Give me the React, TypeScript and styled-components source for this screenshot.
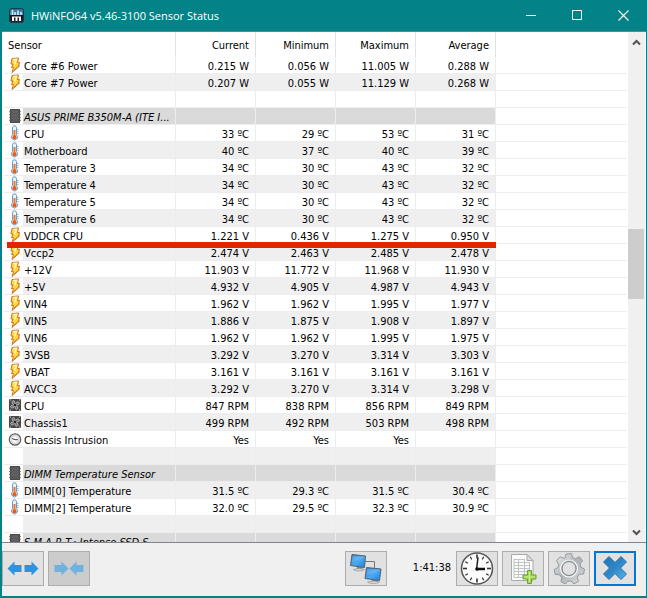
import React from "react";
import styled, { createGlobalStyle, css } from "styled-components";

const Global = createGlobalStyle`
  * { box-sizing: border-box; }
  html, body { margin: 0; padding: 0; }
  body { font-family: "DejaVu Sans Condensed", "DejaVu Sans", sans-serif; font-size: 11px; color: #000; }
  button { font: inherit; padding: 0; cursor: default; }
`;

const Window = styled.div`
  display: flex;
  flex-direction: column;
  height: 100vh;
  min-width: 560px;
  background: #f0f0f0;
  border: solid #038387;
  border-width: 0 1px 2px 2px;
`;

const TitleBar = styled.header`
  display: flex;
  align-items: center;
  flex: none;
  height: 32px;
  padding-left: 7px;
  background: #038387;
  border-bottom: 1px solid #4e8f91;
  color: #fff;
`;

const Title = styled.h1`
  flex: 1;
  margin: 0 0 0 6px;
  font: 400 11px/16px "Open Sans", "Noto Sans", sans-serif;
  white-space: nowrap;
`;

const CaptionButton = styled.button`
  display: flex;
  align-items: center;
  justify-content: center;
  width: 46px;
  height: 31px;
  border: 0;
  background: transparent;
`;

const ListArea = styled.main`
  position: relative;
  display: flex;
  flex: 1;
  min-height: 0;
  padding-right: 1px;
  overflow: hidden;
  background: #fff;
  border-bottom: 1px solid #82838c;
`;

const TableWrap = styled.div`
  flex: 1;
  min-width: 0;
  padding-left: 2px;
  overflow: hidden;
`;

const Table = styled.table`
  width: 100%;
  table-layout: fixed;
  border-collapse: separate;
  border-spacing: 0;
`;

const Col = styled.col<{ $w?: number }>`
  width: ${(p) => (p.$w ? `${p.$w}px` : "auto")};
`;

const HeadCell = styled.th<{ $name?: boolean }>`
  height: 25px;
  padding: ${(p) => (p.$name ? "2px 4px 0" : "2px 6px 0 0")};
  font-weight: 400;
  line-height: 16px;
  text-align: ${(p) => (p.$name ? "left" : "right")};
  border-right: 1px solid #e2e2e2;
  &:last-child { border-right: 0; }
`;

type Tone = "plain" | "alt" | "group";
const tones = { plain: "#fff", alt: "#efefef", group: "#dadada" };

const cell = css`
  height: 17px;
  padding: 3px 0 0;
  line-height: 13px;
  font-weight: 400;
  white-space: nowrap;
  border-bottom: 1px solid #ededed;
`;

const IconCell = styled.td`
  ${cell}
  padding: 0 0 0 4px;
  svg { display: block; }
`;

const NameCell = styled.th<{ $tone: Tone }>`
  ${cell}
  overflow: hidden;
  padding-right: 2px;
  padding-left: 1px;
  text-align: left;
  text-overflow: ellipsis;
  font-style: ${(p) => (p.$tone === "group" ? "italic" : "normal")};
  background: ${(p) => tones[p.$tone]};
  border-right: 1px solid #ededed;
`;

const ValueCell = styled.td<{ $tone: Tone }>`
  ${cell}
  padding-right: 6px;
  text-align: right;
  background: ${(p) => tones[p.$tone]};
  border-right: 1px solid #ededed;
`;

const FillCell = styled.td`
  ${cell}
`;

const Marker = styled.div`
  position: absolute;
  top: 210px;
  left: 5px;
  width: 489px;
  height: 6px;
  background: #e32400;
`;

const ScrollBar = styled.div`
  display: flex;
  flex-direction: column;
  flex: none;
  width: 17px;
  margin-left: 1px;
  padding: 0 1px 0 0;
  background: #f0f0f0;
`;

const ScrollButton = styled.button`
  display: flex;
  align-items: center;
  justify-content: center;
  height: 20px;
  border: 0;
  background: transparent;
`;

const Track = styled.div`
  display: flex;
  flex-direction: column;
  flex: 1;
`;

const Space = styled.div<{ $grow: number }>`
  flex: ${(p) => p.$grow} 1 0;
`;

const Thumb = styled.div`
  flex: none;
  height: 70px;
  background: #cdcdcd;
`;

const Toolbar = styled.footer`
  display: flex;
  align-items: center;
  flex: none;
  gap: 4px;
  height: 53px;
  padding: 0 10px 3px 0;
`;

const ToolButton = styled.button<{ $kind?: "pressed" | "focus" }>`
  display: flex;
  align-items: center;
  justify-content: center;
  flex: none;
  width: 42px;
  height: 35px;
  border: ${(p) => (p.$kind === "focus" ? "2px solid #0078d7" : "1px solid #adadad")};
  background: ${(p) => (p.$kind === "pressed" ? "#cccccc" : "#e1e1e1")};
`;

const Spacer = styled.div`
  flex: 1;
`;

const Clock = styled.time`
  width: 61px;
  padding-right: 1px;
  line-height: 16px;
  text-align: right;
`;

const Bolt = () => (
  <svg width="14" height="16" viewBox="0 0 14 16">
    <path d="M4 1.500 10.500 1 9.500 5.500H11.500L10.500 9H11.500L4 15.500 5.500 10.500H3.500L5 7H3z" fill="#ffd83a" stroke="#c9702c" strokeLinejoin="round" />
    <path d="M5 2.500 8.500 2.300 6.500 7.500" fill="none" stroke="#fff8b8" strokeWidth="1.500" />
    <path d="M10 9.500 5.500 13.500" stroke="#e58a16" />
  </svg>
);

const Thermo = () => (
  <svg width="14" height="16" viewBox="0 0 14 16">
    <path d="M4.500 9.700V2.800a2 2 0 0 1 4 0v6.900a3 3 0 1 1-4 0z" fill="#e4f4fc" stroke="#6b9cc4" />
    <path d="M6.500 5v7" stroke="#f0742a" strokeWidth="2" />
    <circle cx="6.500" cy="12.200" r="2" fill="#ee5a12" />
    <path d="M9 4.500h1.500M9 6.500h1.500M9 8.500h1.500" stroke="#92b6d0" />
  </svg>
);

const Chip = () => (
  <svg width="14" height="16" viewBox="0 0 14 16">
    <path d="M1 3.500h12M1 6.500h12M1 9.500h12M1 12.500h12" stroke="#999" strokeWidth="1.300" />
    <rect x="2.500" y="1.500" width="9" height="13" fill="#5a5a5a" stroke="#4c4c4c" />
    <path d="M4 4h6M4 7h6M4 10h6" stroke="#696969" />
  </svg>
);

const Fan = () => (
  <svg width="14" height="16" viewBox="0 0 14 16">
    <rect x="1" y="2" width="12" height="12" rx="1" fill="#484848" />
    <path d="M7 8C3 7 3.500 4 5.500 3.500 7 4 7 6 7 8c1-4 4-3.500 4.500-1.500C11 8 9 8 7 8c4 1 3.500 4 1.500 4.500C7 12 7 10 7 8c-1 4-4 3.500-4.500 1.500C3 8 5 8 7 8z" fill="#777" stroke="#c8c8c8" strokeWidth=".8" />
    <circle cx="7" cy="8" r="1.300" fill="#222" />
    <path d="M2 3h1M11 3h1M2 13h1M11 13h1" stroke="#ddd" />
  </svg>
);

const Dial = () => (
  <svg width="14" height="16" viewBox="0 0 14 16">
    <circle cx="7" cy="8.500" r="5.700" fill="#ededed" stroke="#606060" strokeWidth="1.200" />
    <circle cx="7" cy="8.500" r="4" fill="#f7f7f7" stroke="#c7c7c7" strokeWidth=".8" />
    <path d="M4 7.500l3 1.200h3" fill="none" stroke="#444" />
  </svg>
);

const AppIcon = () => (
  <svg width="16" height="16" viewBox="0 0 16 16">
    <defs>
      <linearGradient id="app" x2="0" y2="1">
        <stop offset="0" stopColor="#2d6c92" />
        <stop offset=".48" stopColor="#4f9ac0" />
        <stop offset=".5" stopColor="#10141b" />
        <stop offset="1" stopColor="#202833" />
      </linearGradient>
    </defs>
    <rect x=".5" y=".5" width="14" height="14" rx="2" fill="url(#app)" stroke="#20394a" />
    <path d="M3.500 2v5M6 4v3M9 2.500V7M12 4v3" stroke="#d8edf8" strokeWidth="1.500" />
    <path d="M4 9v4M7.500 9v4M11 9v4" stroke="#fff" strokeWidth="2" />
    <path d="M3 9h9" stroke="#fff" />
  </svg>
);

const Arrow = ({ flip, fill, x }: { flip?: boolean; fill: string; x: number }) => (
  <path
    transform={flip ? `translate(${x + 15} 0) scale(-1 1)` : `translate(${x} 0)`}
    d="M.5 8.500 7.500 1.500v3.500H14.500v7H7.500v3.500z"
    fill={fill}
  />
);

const Expand = () => (
  <svg width="34" height="17" viewBox="0 0 34 17">
    <Arrow x={1} fill="#2a93e4" />
    <Arrow x={18} flip fill="#2a93e4" />
  </svg>
);

const Collapse = () => (
  <svg width="32" height="17" viewBox="0 0 32 17">
    <Arrow x={1} flip fill="#6fb1df" />
    <Arrow x={16} fill="#6fb1df" />
  </svg>
);

const Network = () => (
  <svg width="34" height="32" viewBox="0 0 34 32">
    <defs>
      <linearGradient id="screen" x2="1" y2="1">
        <stop offset="0" stopColor="#1266bd" />
        <stop offset=".5" stopColor="#4cabf2" />
        <stop offset="1" stopColor="#1b7fd8" />
      </linearGradient>
    </defs>
    <path d="M16 9.500h9.500v7" fill="none" stroke="#777" />
    <path d="M8 15h5l1 3H7z" fill="#888" />
    <path d="M4.500 17.500q6-2 11 0-1 1.500-5.500 1.500t-5.500-1.500z" fill="#d9d9d9" stroke="#8b8b8b" strokeWidth=".6" />
    <path d="M3 2.500 16.500 4 15.500 15.500 1.500 13.500z" fill="url(#screen)" stroke="#55606c" />
    <path d="M3.500 3.500 15.500 5 3 10.500z" fill="#8fcbf8" opacity=".45" />
    <path d="M23 27h5l1 3h-7z" fill="#888" />
    <path d="M18.500 30q6-2 12 0-1 1.500-6 1.500t-6-1.500z" fill="#d9d9d9" stroke="#8b8b8b" strokeWidth=".6" />
    <path d="M17.500 15.500 32 17 30.500 28.500 16 26.500z" fill="url(#screen)" stroke="#55606c" />
    <path d="M18 16.500 31 18 17.500 23.500z" fill="#8fcbf8" opacity=".45" />
  </svg>
);

const BigClock = () => (
  <svg width="34" height="33" viewBox="0 0 34 33">
    <circle cx="17" cy="16.500" r="15.500" fill="#fcfcfc" stroke="#555" strokeWidth="1.500" />
    {Array.from({ length: 12 }, (_, i) => (
      <path key={i} d={i % 3 ? "M17 3v3" : "M17 2.500v4"} stroke="#333" strokeWidth={i % 3 ? 1.2 : 1.6} transform={`rotate(${i * 30} 17 16.500)`} />
    ))}
    <path d="M16.500 17.500 18 5.500" stroke="#222" strokeWidth="1.500" />
    <path d="M16 17h9" stroke="#111" strokeWidth="2.500" />
    <circle cx="17" cy="17" r="1.800" fill="#111" />
  </svg>
);

const Report = () => (
  <svg width="32" height="32" viewBox="0 0 32 32">
    <path d="M4.500 2.500H20l6 6v20H4.500z" fill="#fafafa" stroke="#aaa" />
    <path d="M20 2.500v6h6z" fill="#ddd" stroke="#aaa" />
    <path d="M7 7.500h11M7 10.500h16M7 13.500h16M7 16.500h16M7 19.500h16M7 22.500h14M7 25.500h14M7 7v19M11.500 7v19M17.500 7v19M22.500 10v14" fill="none" stroke="#b9bec0" strokeWidth=".9" />
    <path d="M20.500 18.500h4v4.500h4.500v4h-4.500v4.500h-4v-4.500H16v-4h4.500z" fill="#a5d75b" stroke="#69a52d" />
    <path d="M22.500 20v10M17.500 25h10" stroke="#cdf08e" />
  </svg>
);

const Gear = () => (
  <svg width="34" height="33" viewBox="0 0 34 33">
    <defs>
      <linearGradient id="gear" x2="1" y2="1">
        <stop offset="0" stopColor="#f1f3f3" />
        <stop offset=".5" stopColor="#aeb4b6" />
        <stop offset="1" stopColor="#dfe2e3" />
      </linearGradient>
    </defs>
    <g fill="url(#gear)" stroke="#83898b" strokeWidth=".8" strokeLinejoin="round">
      <path
        fillRule="evenodd"
        d="M14 2l5.500-.500 1 4 3 1.300 3.800-2 3.300 4-2.600 3.300 1 3.200 3.500 1.700-1 5-4.300.300-2 3 1.300 4-4.500 2.700-3-3-3.500.300L13.500 32 9 29.800l.700-4.300-2.200-2.700-4.300-.300-1-5 3.800-2 .800-3L4.500 9 8 4.800l3.800 1.600 1.700-1zM17 9.500a7 7 0 1 0 .01 0z"
      />
      <circle cx="17" cy="16.500" r="8.500" fill="none" stroke="#f4f5f5" strokeWidth="1.200" />
      <circle cx="17" cy="16.500" r="7" fill="none" />
    </g>
  </svg>
);

const Cross = () => (
  <svg width="26" height="26" viewBox="0 0 26 26">
    <defs>
      <linearGradient id="cross" x2="1" y2="1">
        <stop offset="0" stopColor="#2374b4" />
        <stop offset=".5" stopColor="#2f86c6" />
        <stop offset="1" stopColor="#58b4e8" />
      </linearGradient>
    </defs>
    <path d="M7 1.500l6 6 6-6L24.500 7l-6 6 6 6-5.500 5.500-6-6-6 6L1.500 19l6-6-6-6z" fill="url(#cross)" stroke="#2576ad" strokeLinejoin="round" />
  </svg>
);

const icons = { bolt: Bolt, thermo: Thermo, chip: Chip, fan: Fan, dial: Dial };

type Row = { icon?: keyof typeof icons; name?: string; values?: string[] };

const r = (icon: Row["icon"], name: string, unit = "", ...values: string[]): Row => ({
  icon,
  name,
  values: values.map((v) => (unit ? `${v} ${unit}` : v)),
});

const rows: Row[] = [
  r("bolt", "Core #6 Power", "W", "0.215", "0.056", "11.005", "0.288"),
  r("bolt", "Core #7 Power", "W", "0.207", "0.055", "11.129", "0.268"),
  {},
  r("chip", "ASUS PRIME B350M-A (ITE I..."),
  r("thermo", "CPU", "ºC", "33", "29", "53", "31"),
  r("thermo", "Motherboard", "ºC", "40", "37", "40", "39"),
  r("thermo", "Temperature 3", "ºC", "34", "30", "43", "32"),
  r("thermo", "Temperature 4", "ºC", "34", "30", "43", "32"),
  r("thermo", "Temperature 5", "ºC", "34", "30", "43", "32"),
  r("thermo", "Temperature 6", "ºC", "34", "30", "43", "32"),
  r("bolt", "VDDCR CPU", "V", "1.221", "0.436", "1.275", "0.950"),
  r("bolt", "Vccp2", "V", "2.474", "2.463", "2.485", "2.478"),
  r("bolt", "+12V", "V", "11.903", "11.772", "11.968", "11.930"),
  r("bolt", "+5V", "V", "4.932", "4.905", "4.987", "4.943"),
  r("bolt", "VIN4", "V", "1.962", "1.962", "1.995", "1.977"),
  r("bolt", "VIN5", "V", "1.886", "1.875", "1.908", "1.897"),
  r("bolt", "VIN6", "V", "1.962", "1.962", "1.995", "1.975"),
  r("bolt", "3VSB", "V", "3.292", "3.270", "3.314", "3.303"),
  r("bolt", "VBAT", "V", "3.161", "3.161", "3.161", "3.161"),
  r("bolt", "AVCC3", "V", "3.292", "3.270", "3.314", "3.298"),
  r("fan", "CPU", "RPM", "847", "838", "856", "849"),
  r("fan", "Chassis1", "RPM", "499", "492", "503", "498"),
  r("dial", "Chassis Intrusion", "", "Yes", "Yes", "Yes"),
  {},
  r("chip", "DIMM Temperature Sensor"),
  r("thermo", "DIMM[0] Temperature", "ºC", "31.5", "29.3", "31.5", "30.4"),
  r("thermo", "DIMM[2] Temperature", "ºC", "32.0", "29.5", "32.3", "30.9"),
  {},
  r("chip", "S.M.A.R.T.: Intenso  SSD S..."),
];

const SensorRow = ({ row, index }: { row: Row; index: number }) => {
  const tone: Tone = row.icon === "chip" ? "group" : index % 2 ? "alt" : "plain";
  const Icon = row.icon && icons[row.icon];
  return (
    <tr>
      <IconCell>{Icon && <Icon />}</IconCell>
      <NameCell scope="row" $tone={tone}>{row.name}</NameCell>
      {[0, 1, 2, 3].map((i) => (
        <ValueCell key={i} $tone={tone}>{row.values?.[i]}</ValueCell>
      ))}
      <FillCell />
    </tr>
  );
};

export default function App() {
  return (
    <Window>
      <Global />
      <TitleBar>
        <AppIcon />
        <Title>HWiNFO64 v5.46-3100 Sensor Status</Title>
        <CaptionButton aria-label="Minimize">
          <svg width="11" height="11" viewBox="0 0 11 11"><path d="M0 5.500h10" stroke="#fff" /></svg>
        </CaptionButton>
        <CaptionButton aria-label="Maximize">
          <svg width="11" height="11" viewBox="0 0 11 11"><path d="M.5 .5h9v9h-9z" fill="none" stroke="#fff" /></svg>
        </CaptionButton>
        <CaptionButton aria-label="Close">
          <svg width="11" height="11" viewBox="0 0 11 11"><path d="M.5 .5l10 10M10.500 .5l-10 10" stroke="#fff" strokeWidth="1.100" /></svg>
        </CaptionButton>
      </TitleBar>
      <ListArea>
        <TableWrap>
          <Table>
            <colgroup>
              <Col $w={19} />
              <Col $w={153} />
              <Col $w={80} />
              <Col $w={80} />
              <Col $w={80} />
              <Col $w={80} />
              <Col />
            </colgroup>
            <thead>
              <tr>
                <HeadCell $name colSpan={2}>Sensor</HeadCell>
                <HeadCell>Current</HeadCell>
                <HeadCell>Minimum</HeadCell>
                <HeadCell>Maximum</HeadCell>
                <HeadCell>Average</HeadCell>
                <HeadCell />
              </tr>
            </thead>
            <tbody>
              {rows.map((row, i) => (
                <SensorRow key={i} row={row} index={i} />
              ))}
            </tbody>
          </Table>
        </TableWrap>
        <ScrollBar>
          <ScrollButton aria-label="Scroll up">
            <svg width="9" height="7" viewBox="0 0 9 7"><path d="M1 5.500 4.500 2 8 5.500" fill="none" stroke="#505050" strokeWidth="2" /></svg>
          </ScrollButton>
          <Track>
            <Space $grow={178} />
            <Thumb />
            <Space $grow={224} />
          </Track>
          <ScrollButton aria-label="Scroll down">
            <svg width="9" height="7" viewBox="0 0 9 7"><path d="M1 1.500 4.500 5 8 1.500" fill="none" stroke="#505050" strokeWidth="2" /></svg>
          </ScrollButton>
        </ScrollBar>
        <Marker />
      </ListArea>
      <Toolbar>
        <ToolButton aria-label="Expand columns"><Expand /></ToolButton>
        <ToolButton aria-label="Shrink columns" $kind="pressed"><Collapse /></ToolButton>
        <Spacer />
        <ToolButton aria-label="Remote monitoring"><Network /></ToolButton>
        <Clock>1:41:38</Clock>
        <ToolButton aria-label="Reset clock"><BigClock /></ToolButton>
        <ToolButton aria-label="Start logging"><Report /></ToolButton>
        <ToolButton aria-label="Settings"><Gear /></ToolButton>
        <ToolButton aria-label="Close sensors" $kind="focus"><Cross /></ToolButton>
      </Toolbar>
    </Window>
  );
}
